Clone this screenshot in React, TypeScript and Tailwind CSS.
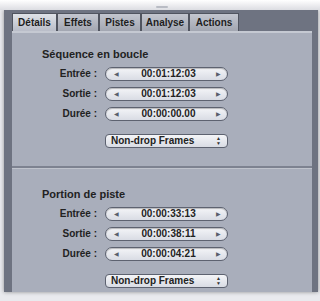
import React from "react";

const font = { fontFamily: '"Liberation Sans", Arial, sans-serif' };

function Field({ value }: { value: string }) {
  return (
    <div className="flex h-[14px] w-[123px] items-center rounded-full border border-[#5d6270] bg-gradient-to-b from-[#f4f5f8] to-[#d9dce4] pl-[8px] pr-[6px] shadow-[inset_0_1px_1px_rgba(0,0,0,0.25)]">
      <span className="text-[6px] leading-none text-[#5a5f6b]">◀</span>
      <span className="flex-1 pl-[2px] text-center text-[10px] font-bold leading-none text-[#222]">{value}</span>
      <span className="text-[6px] leading-none text-[#5a5f6b]">▶</span>
    </div>
  );
}

function Popup() {
  return (
    <div className="flex h-[14px] w-[123px] items-center rounded-[4px] border border-[#5d6270] bg-gradient-to-b from-[#f4f5f8] to-[#d9dce4] pl-[5px] pr-[6px]">
      <span className="flex-1 text-[10px] font-bold leading-none text-[#222]">Non-drop Frames</span>
      <span className="flex flex-col items-center text-[5px] leading-[5px] text-[#333]">
        <span>▲</span>
        <span>▼</span>
      </span>
    </div>
  );
}

function Row({ label, value }: { label: string; value: string }) {
  return (
    <div className="flex h-[14px] items-center">
      <div className="w-[93px] pr-[8px] text-right text-[10px] font-bold leading-none text-[#222]">{label}</div>
      <Field value={value} />
    </div>
  );
}

function Section({ title, rows }: { title: string; rows: [string, string][] }) {
  return (
    <div className="flex flex-col">
      <div className="pl-[30px] text-[11px] font-bold leading-none text-[#222]">{title}</div>
      <div className="mt-[7px] flex flex-col gap-[6px]">
        {rows.map(([l, v]) => (
          <Row key={l} label={l} value={v} />
        ))}
      </div>
      <div className="mt-[13px] pl-[93px]">
        <Popup />
      </div>
    </div>
  );
}

const tabs: [string, string][] = [
  ["Détails", "w-[45px]"],
  ["Effets", "w-[42px]"],
  ["Pistes", "w-[42px]"],
  ["Analyse", "w-[48px]"],
  ["Actions", "w-[50px]"],
];

export default function App() {
  return (
    <div className="h-[301px] w-[320px] overflow-hidden bg-[#e9eaee]" style={font}>
      <div className="relative h-[10px] bg-gradient-to-b from-[#ffffff] to-[#dcdde2]">
        <div className="absolute left-[156px] top-[6px] h-[2px] w-[12px] rounded-full bg-[#b9bcc4]" />
      </div>
      <div className="ml-[4px] mr-[2px] flex h-[282px] flex-col bg-[#6e7381] pl-[8px] pr-[6px] pt-[3px] shadow-[0_0_4px_rgba(0,0,0,0.4)]">
        <div className="flex h-[18px] items-end">
          {tabs.map(([t, w], i) => (
            <div
              key={t}
              className={
                "flex h-[18px] items-center justify-center border border-b-0 border-[#50545f] text-[10px] font-bold text-[#1e1e1e] " +
                w +
                " " +
                (i === 0
                  ? "bg-gradient-to-b from-[#dfe2e8] to-[#b9bdc8]"
                  : "bg-gradient-to-b from-[#c3c6cf] to-[#a2a6b1]")
              }
            >
              {t}
            </div>
          ))}
        </div>
        <div className="flex flex-1 flex-col border-t-[2px] border-[#c5c9d2] bg-[#a9aebb]">
          <div className="pt-[16px] pb-[18px]">
            <Section
              title="Séquence en boucle"
              rows={[
                ["Entrée :", "00:01:12:03"],
                ["Sortie :", "00:01:12:03"],
                ["Durée :", "00:00:00.00"],
              ]}
            />
          </div>
          <div className="h-[2px] bg-[#7d8290]" />
          <div className="h-[1px] bg-[#bfc3cc]" />
          <div className="pt-[20px]">
            <Section
              title="Portion de piste"
              rows={[
                ["Entrée :", "00:00:33:13"],
                ["Sortie :", "00:00:38:11"],
                ["Durée :", "00:00:04:21"],
              ]}
            />
          </div>
        </div>
      </div>
    </div>
  );
}
